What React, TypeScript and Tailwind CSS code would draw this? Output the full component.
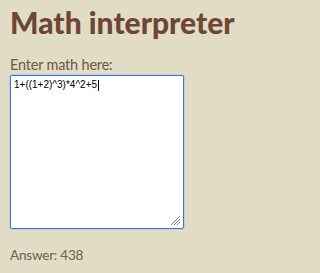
export default function App() {
  return (
    <div className="min-h-[273px] bg-[#e2dcc6] px-[10px] pt-[2px] font-['Lato','Liberation_Sans',sans-serif]">
      <h1 className="text-[30px] font-black leading-[40px] text-[#6d4636]">Math interpreter</h1>
      <label className="mt-[14px] block text-[14.5px] leading-[18px] tracking-[-0.2px] text-[#6e5645]">Enter math here:</label>
      <div className="relative mt-[1px] h-[154px] w-[174px] rounded-[2px] border border-[#3c78c8] bg-white shadow-[0_0_0_1px_#b9cfe8]">
        <div className="px-[3px] pt-[3px] font-['Liberation_Sans',sans-serif] text-[10px] leading-[12px] text-black">
          1+((1+2)^3)*4^2+5<span className="ml-[1px] inline-block h-[11px] w-px bg-black align-middle" />
        </div>
        <svg className="absolute right-[2px] bottom-[2px]" width="11" height="11" viewBox="0 0 11 11">
          <path d="M10 1L1 10M10 4L4 10M10 7L7 10" stroke="#7f7f7f" strokeWidth="1" />
        </svg>
      </div>
      <p className="mt-[17px] text-[13.5px] leading-[18px] tracking-[-0.2px] text-[#6e6151]">Answer: 438</p>
    </div>
  )
}
